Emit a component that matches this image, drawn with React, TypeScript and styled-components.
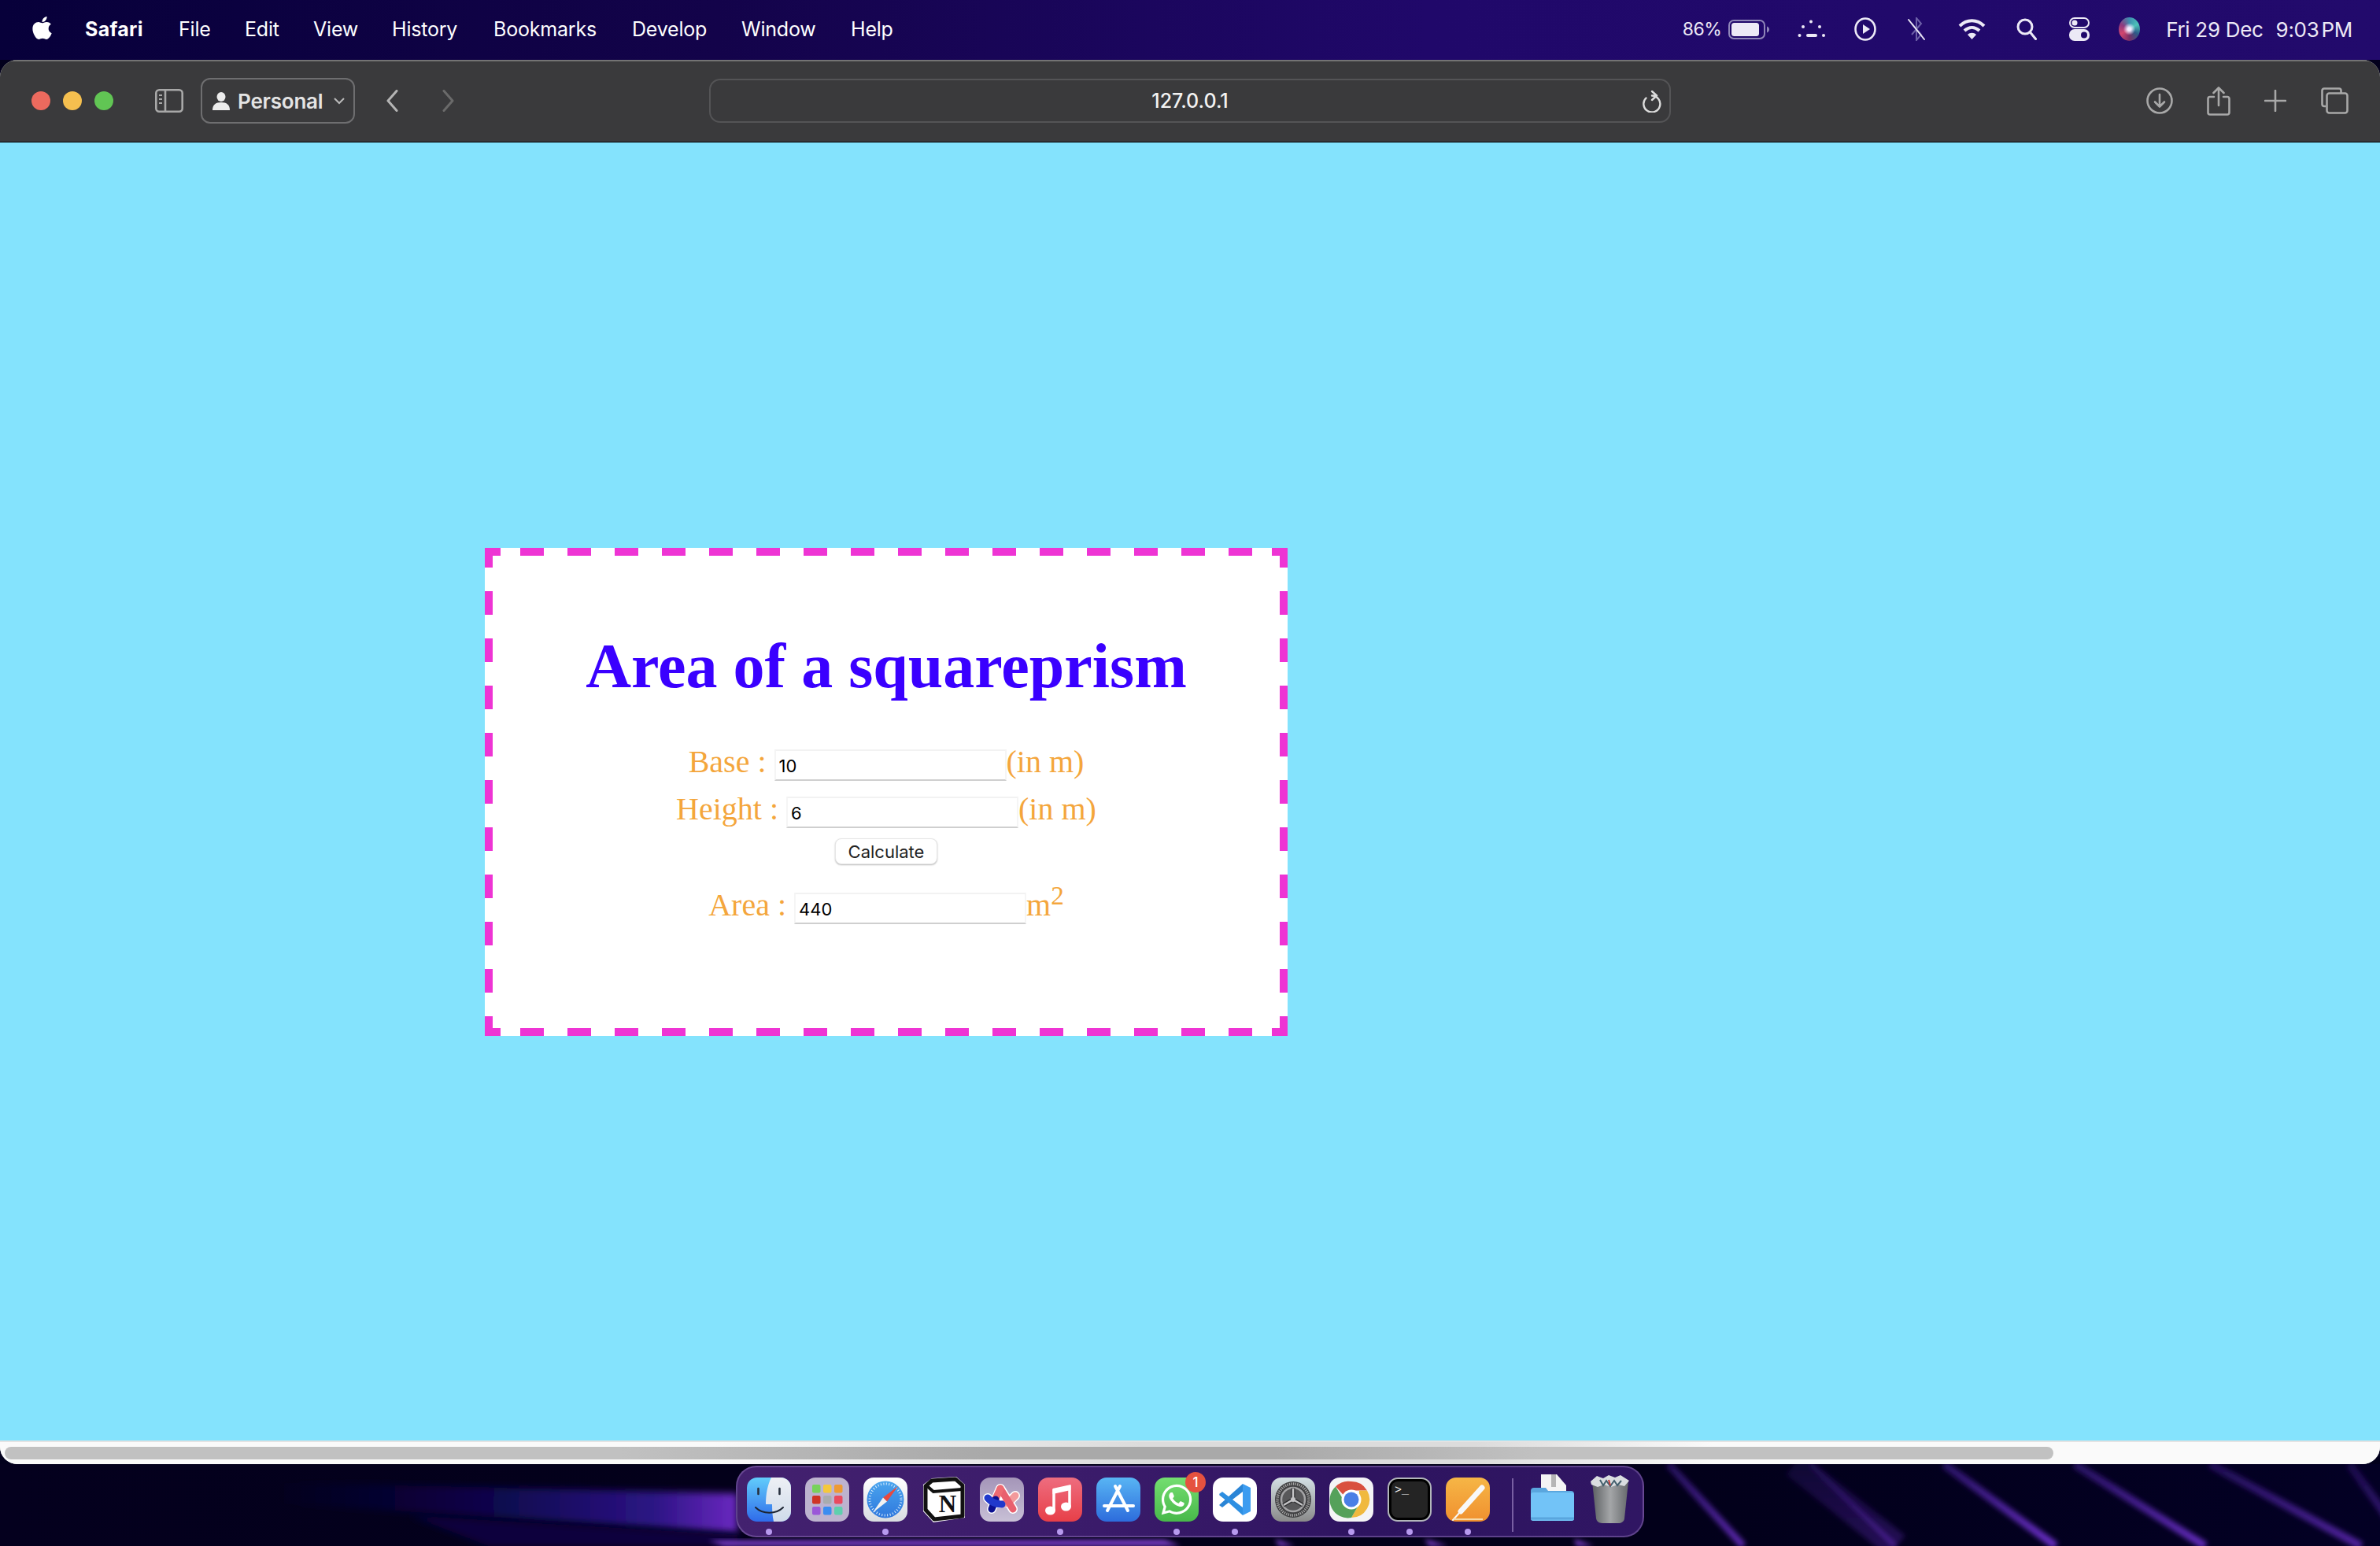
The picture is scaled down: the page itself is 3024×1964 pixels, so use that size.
import React from "react";
import styled, { createGlobalStyle } from "styled-components";
import { FaApple, FaWhatsapp } from "react-icons/fa";

const Global = createGlobalStyle`
  html, body { margin: 0; padding: 0; background: #000; }
  * { box-sizing: border-box; }
`;

const UI = `Inter, "Noto Sans", sans-serif`;
const SERIF = `"Liberation Serif", "Times New Roman", serif`;
const MAGENTA = "#EE34D4";

const Screen = styled.div`
  width: 3024px;
  height: 1964px;
  display: flex;
  flex-direction: column;
  overflow: hidden;
  background: #02001c;
`;

const MenuBar = styled.header`
  height: 76px;
  flex: none;
  display: flex;
  align-items: center;
  justify-content: space-between;
  padding: 0 35px 2px 37px;
  color: #fff;
  font: 500 25px ${UI};
  background: linear-gradient(90deg, #07003a 0%, #13034a 30%, #20086a 60%, #220a6c 100%);
`;

const MenuLeft = styled.nav`
  display: flex;
  align-items: center;
  height: 100%;
`;

const AppleMark = styled.span`
  display: flex;
  width: 71px;
  margin-top: -4px;
  font-size: 33px;
`;

const MenuItem = styled.span<{ $w: number; $bold?: boolean }>`
  width: ${(p) => p.$w}px;
  white-space: nowrap;
  font-weight: ${(p) => (p.$bold ? 700 : 400)};
  letter-spacing: ${(p) => (p.$bold ? "0.3px" : "-0.2px")};
`;

const MenuRight = styled.div`
  display: flex;
  align-items: center;
  height: 100%;
  color: #ece9f6;
`;

const Percent = styled.span`
  white-space: nowrap;
  letter-spacing: -0.6px;
  font-size: 23px;
  font-weight: 400;
`;

const DateText = styled.span`
  margin-left: 33px;
  white-space: nowrap;
  letter-spacing: -0.3px;
  font-size: 26px;
  font-weight: 400;
`;

const TimeText = styled.span`
  margin-left: 16px;
  white-space: nowrap;
  letter-spacing: -0.3px;
  word-spacing: -4px;
  font-size: 26px;
  font-weight: 400;
`;

const StatusSlot = styled.span<{ $ml: number }>`
  display: flex;
  margin-left: ${(p) => p.$ml}px;
`;

const Siri = styled.span`
  display: block;
  width: 27px;
  height: 30px;
  margin-left: 37px;
  border-radius: 50%;
  background:
    radial-gradient(circle at 50% 50%, #f3eaff 0 10%, transparent 38%),
    conic-gradient(#3d8fb0, #4cc2b8, #2b5a88, #7b2f66, #d2456f, #8e3a80, #3d8fb0);
`;

const Window = styled.main`
  height: 1784px;
  flex: none;
  display: flex;
  flex-direction: column;
  border-radius: 22px;
  overflow: hidden;
  background: #fafafa;
`;

const Toolbar = styled.div`
  height: 105px;
  flex: none;
  display: flex;
  align-items: center;
  padding: 0 39px 2px 40px;
  background: #3a3a3c;
  border-top: 2px solid #737373;
  border-bottom: 1px solid #000;
`;

const Lights = styled.div`
  display: flex;
  gap: 16px;
`;

const Light = styled.span<{ $c: string }>`
  width: 24px;
  height: 24px;
  border-radius: 50%;
  background: ${(p) => p.$c};
`;

const ToolIcon = styled.span<{ $ml: number }>`
  display: flex;
  margin-left: ${(p) => p.$ml}px;
  flex: none;
`;

const Profile = styled.div`
  width: 196px;
  height: 58px;
  margin-left: 22px;
  flex: none;
  display: flex;
  align-items: center;
  padding-left: 13px;
  border: 2px solid #6e6e70;
  border-radius: 12px;
  color: #e4e4e4;
  font: 600 26px ${UI};
  letter-spacing: -0.2px;
`;

const ProfileName = styled.span`
  margin: 0 14px 0 10px;
`;

const UrlBar = styled.div`
  width: 1222px;
  height: 56px;
  margin-left: 324px;
  flex: none;
  position: relative;
  display: flex;
  align-items: center;
  justify-content: center;
  border: 2px solid #545456;
  border-radius: 14px;
  color: #f2f2f2;
  font: 500 25px ${UI};
`;

const Reload = styled.span`
  position: absolute;
  right: 10px;
  top: 13px;
  display: flex;
`;

const Page = styled.section`
  flex: 1;
  padding: 515px 0 0 616px;
  background: #84e3fd;
`;

const Card = styled.div`
  width: 1020px;
  height: 620px;
  padding: 104px 0 0;
  text-align: center;
  font-family: ${SERIF};
  background-color: #fff;
  background-image:
    linear-gradient(${MAGENTA}, ${MAGENTA}),
    linear-gradient(${MAGENTA}, ${MAGENTA}),
    linear-gradient(${MAGENTA}, ${MAGENTA}),
    linear-gradient(${MAGENTA}, ${MAGENTA}),
    repeating-linear-gradient(90deg, ${MAGENTA} 0 15px, transparent 15px 45px, ${MAGENTA} 45px 60px),
    repeating-linear-gradient(90deg, ${MAGENTA} 0 15px, transparent 15px 45px, ${MAGENTA} 45px 60px),
    repeating-linear-gradient(180deg, ${MAGENTA} 0 25px, transparent 25px 55px, ${MAGENTA} 55px 60px),
    repeating-linear-gradient(180deg, ${MAGENTA} 0 25px, transparent 25px 55px, ${MAGENTA} 55px 60px);
  background-repeat: no-repeat;
  background-size: 20px 10px, 20px 10px, 20px 10px, 20px 10px, 100% 10px, 100% 10px, 10px 100%, 10px 100%;
  background-position: left top, right top, left bottom, right bottom, left top, left bottom, left top, right top;
`;

const Title = styled.h1`
  margin: 0 0 46px;
  height: 92px;
  line-height: 92px;
  font-size: 80px;
  font-weight: 700;
  color: #3a00ff;
`;

const Line = styled.div<{ $top?: number }>`
  height: 60px;
  line-height: 60px;
  margin-top: ${(p) => p.$top ?? 0}px;
  font-size: 40px;
  color: #f4a63c;
  white-space: nowrap;
`;

const Field = styled.input`
  width: 295px;
  height: 40px;
  padding: 3px 4px 0;
  border: 0;
  border-top: 2px solid #f2f2f2;
  border-left: 2px solid #f5f5f5;
  border-right: 2px solid #f5f5f5;
  border-bottom: 2px solid #cfcfcf;
  background: #fff;
  color: #000;
  font: 400 22px ${UI};
  outline: none;
`;

const ButtonLine = styled.div`
  height: 33px;
  margin-top: 7px;
  display: flex;
  justify-content: center;
`;

const CalcButton = styled.button`
  width: 130px;
  height: 33px;
  padding: 0;
  border: 1px solid #e6e6e6;
  border-radius: 8px;
  background: #fff;
  box-shadow: 0 1px 2px rgba(0, 0, 0, 0.28);
  color: #222;
  font: 400 22px ${UI};
`;

const ScrollTrack = styled.div`
  height: 30px;
  flex: none;
  padding: 6px 415px 6px 6px;
  background: linear-gradient(90deg, #fafafa 0%, #fafafa 30%, #dcdcdc 48%, #dcdcdc 62%, #fafafa 72%);
  border-top: 2px solid #e3e3e3;
`;

const ScrollThumb = styled.div`
  height: 16px;
  border-radius: 8px;
  background: linear-gradient(90deg, #c1c1c1 0%, #c1c1c1 30%, #a9a9a9 48%, #a9a9a9 62%, #c1c1c1 75%);
`;

const DockStrip = styled.footer`
  flex: 1;
  position: relative;
  display: flex;
  justify-content: center;
  padding-top: 2px;
  background: linear-gradient(90deg, #04001e 0%, #03001a 30%, #02001a 70%, #030024 100%);
`;

const Wallpaper = styled.svg`
  position: absolute;
  inset: 0;
  width: 100%;
  height: 100%;
`;

const Dock = styled.div`
  position: relative;
  height: 91px;
  display: flex;
  gap: 18px;
  padding: 13px 13px 0 12px;
  border: 2px solid rgba(150, 120, 190, 0.45);
  border-radius: 26px;
  background: linear-gradient(90deg, #43216f 0%, #3a1b6a 40%, #2e1460 70%, #301663 100%);
`;

const DockItem = styled.div`
  position: relative;
  width: 56px;
  height: 76px;
  flex: none;
`;

const Tile = styled.svg`
  display: block;
  width: 56px;
  height: 56px;
  overflow: visible;
`;

const RunDot = styled.span`
  position: absolute;
  left: 24px;
  top: 65px;
  width: 8px;
  height: 8px;
  border-radius: 50%;
  background: #b79aee;
`;

const Badge = styled.span`
  position: absolute;
  left: 39px;
  top: -7px;
  width: 26px;
  height: 26px;
  border-radius: 50%;
  background: #e5523f;
  color: #fff;
  font: 500 17px/26px ${UI};
  text-align: center;
`;

const Divider = styled.span`
  width: 2px;
  height: 68px;
  margin: 1px 3px 0 10px;
  background: rgba(170, 145, 205, 0.6);
  flex: none;
`;

const G = "#a8a8a8";

const SidebarIcon = () => (
  <svg width="36" height="30" viewBox="0 0 36 30" fill="none" stroke={G} strokeWidth="2.6">
    <rect x="1.3" y="1.3" width="33.4" height="27.4" rx="4" />
    <path d="M13 1.5v27" />
    <path d="M5 8h4M5 13h4M5 18h4" strokeWidth="2" />
  </svg>
);

const Person = () => (
  <svg width="22" height="23" viewBox="0 0 22 23" fill="#ececec">
    <ellipse cx="11" cy="6" rx="5.5" ry="6" />
    <path d="M0 23c0-7 4-10 11-10s11 3 11 10z" />
  </svg>
);

const Caret = () => (
  <svg width="14" height="9" viewBox="0 0 14 9" fill="none" stroke="#bbb" strokeWidth="2">
    <path d="M1 1l6 6 6-6" />
  </svg>
);

const Chevron = ({ dir, color }: { dir: "l" | "r"; color: string }) => (
  <svg width="15" height="28" viewBox="0 0 15 28" fill="none" stroke={color} strokeWidth="3" strokeLinecap="round" strokeLinejoin="round">
    <path d={dir === "l" ? "M13 1.5L2 14l11 12.5" : "M2 1.5L13 14 2 26.5"} />
  </svg>
);

const ReloadIcon = () => (
  <svg width="24" height="28" viewBox="0 0 24 28" fill="none" stroke="#dcdcdc" strokeWidth="2.4" strokeLinecap="round" strokeLinejoin="round">
    <path d="M4.500 9.500A10.500 10.500 0 1 0 12 6.500H17.500" />
    <path d="M12 1l6 5.500L12 12" />
  </svg>
);

const DownloadIcon = () => (
  <svg width="34" height="34" viewBox="0 0 34 34" fill="none" stroke={G} strokeWidth="2.6" strokeLinecap="round" strokeLinejoin="round">
    <circle cx="17" cy="17" r="15.5" />
    <path d="M17 9v15M11 18.5l6 6 6-6" />
  </svg>
);

const ShareIcon = () => (
  <svg width="30" height="37" viewBox="0 0 30 37" fill="none" stroke={G} strokeWidth="2.6" strokeLinecap="round" strokeLinejoin="round">
    <path d="M9 13H4a2.5 2.5 0 0 0-2.5 2.5v17.5A2.5 2.5 0 0 0 4 35.500h22a2.500 2.500 0 0 0 2.500-2.500V15.500A2.500 2.500 0 0 0 26 13h-5" />
    <path d="M15 24V2M8.500 8L15 1.500 21.500 8" />
  </svg>
);

const PlusIcon = () => (
  <svg width="28" height="28" viewBox="0 0 28 28" fill="none" stroke={G} strokeWidth="2.6" strokeLinecap="round">
    <path d="M14 1v26M1 14h26" />
  </svg>
);

const TabsIcon = () => (
  <svg width="35" height="34" viewBox="0 0 35 34" fill="none" stroke={G} strokeWidth="2.6" strokeLinejoin="round">
    <path d="M6 24H4a2.500 2.500 0 0 1-2.500-2.500V4A2.500 2.500 0 0 1 4 1.500h19A2.500 2.500 0 0 1 25.500 4v3" />
    <rect x="7.500" y="7.500" width="26" height="25" rx="3" />
  </svg>
);

const Battery = () => (
  <svg width="52" height="25" viewBox="0 0 52 25">
    <rect x="1" y="1" width="45" height="23" rx="6" fill="none" stroke="#8f86b8" strokeWidth="2" />
    <rect x="4" y="4" width="35" height="17" rx="3.500" fill="#ece9f6" />
    <path d="M49 8.500c2 .8 3 2.200 3 4s-1 3.200-3 4z" fill="#8f86b8" />
  </svg>
);

const DotsIcon = () => (
  <svg width="36" height="24" viewBox="0 0 36 24" fill="#ece9f6">
    <circle cx="17" cy="2.500" r="2" />
    <circle cx="7" cy="9" r="2" />
    <circle cx="28" cy="9" r="2" />
    <circle cx="2.500" cy="20" r="2" />
    <rect x="11" y="18" width="14" height="4" rx="2" />
    <circle cx="33" cy="20" r="2" />
  </svg>
);

const PlayIcon = () => (
  <svg width="28" height="30" viewBox="0 0 28 30" fill="none" stroke="#ece9f6" strokeWidth="2.6">
    <ellipse cx="14" cy="15" rx="12.500" ry="13.500" />
    <path d="M11 9l9 6-9 6z" fill="#ece9f6" stroke="none" />
  </svg>
);

const BluetoothOff = () => (
  <svg width="24" height="30" viewBox="0 0 24 30" fill="none" strokeWidth="2">
    <path d="M6 8l12 14-6 7V1l6 7L6 22" stroke="#6d60a8" />
    <path d="M2 3l20 25" stroke="#ece9f6" strokeLinecap="round" />
  </svg>
);

const WifiIcon = () => (
  <svg width="35" height="28" viewBox="0 0 35 28" fill="none" stroke="#ece9f6" strokeWidth="4">
    <path d="M2 10C11 1 24 1 33 10" />
    <path d="M8 16c6-5.500 13-5.500 19 0" />
    <path d="M17.500 27l-5.500-6c3-3 8-3 11 0z" fill="#ece9f6" stroke="none" />
  </svg>
);

const SearchIcon = () => (
  <svg width="26" height="28" viewBox="0 0 26 28" fill="none" stroke="#ece9f6" strokeWidth="3" strokeLinecap="round">
    <circle cx="11" cy="11" r="9" />
    <path d="M17.500 18l7 8.500" />
  </svg>
);

const ControlIcon = () => (
  <svg width="26" height="30" viewBox="0 0 26 30">
    <rect x="1" y="1" width="24" height="12" rx="6" fill="none" stroke="#ece9f6" strokeWidth="2" />
    <circle cx="7" cy="7" r="3.500" fill="#ece9f6" />
    <rect y="15" width="26" height="15" rx="7" fill="#ece9f6" />
    <circle cx="19" cy="22.500" r="4" fill="#20086a" />
  </svg>
);

const Finder = () => (
  <Tile viewBox="0 0 56 56">
    <defs>
      <linearGradient id="finderA" x1="0" y1="0" x2="0" y2="1">
        <stop offset="0" stopColor="#62cdfb" />
        <stop offset="1" stopColor="#2f6bea" />
      </linearGradient>
      <linearGradient id="finderB" x1="0" y1="0" x2="0" y2="1">
        <stop offset="0" stopColor="#eef0f5" />
        <stop offset="1" stopColor="#cfdbea" />
      </linearGradient>
      <clipPath id="finderClip">
        <rect width="56" height="56" rx="13" />
      </clipPath>
    </defs>
    <g clipPath="url(#finderClip)">
      <rect width="56" height="56" fill="url(#finderA)" />
      <path d="M31 0C26 10 24 22 24 34h8c0 8 .500 15 2 22h22V0z" fill="url(#finderB)" />
    </g>
    <path d="M14.500 14v7M41.500 14v7" stroke="#27303f" strokeWidth="2.600" strokeLinecap="round" />
    <path d="M11 38c9 9 26 9 35 0" fill="none" stroke="#1d2533" strokeWidth="2" strokeLinecap="round" />
  </Tile>
);

const LAUNCH = ["#78d25c", "#f5c83c", "#ee9a33", "#cf3426", "#a9acae", "#ea4a5f", "#9b57d8", "#3b8df0", "#5fcfae"];

const Launchpad = () => (
  <Tile viewBox="0 0 56 56">
    <rect width="56" height="56" rx="13" fill="#bdb3cf" />
    {LAUNCH.map((c, i) => (
      <rect key={c} x={9 + (i % 3) * 14} y={9 + Math.floor(i / 3) * 14} width="10.500" height="10.500" rx="2" fill={c} />
    ))}
  </Tile>
);

const Safari = () => (
  <Tile viewBox="0 0 56 56">
    <defs>
      <linearGradient id="safariT" x1="0" y1="0" x2="0" y2="1">
        <stop offset="0" stopColor="#ffffff" />
        <stop offset="1" stopColor="#d8dce0" />
      </linearGradient>
      <linearGradient id="safariC" x1="0" y1="0" x2="0" y2="1">
        <stop offset="0" stopColor="#4aa5ee" />
        <stop offset="1" stopColor="#2f78dd" />
      </linearGradient>
    </defs>
    <rect width="56" height="56" rx="13" fill="url(#safariT)" />
    <circle cx="28" cy="28" r="23.500" fill="url(#safariC)" />
    <circle cx="28" cy="28" r="20" fill="none" stroke="#d8ecfb" strokeWidth="3" strokeDasharray="1 2.500" />
    <path d="M44 11L25 25.500l5 5z" fill="#e8493f" />
    <path d="M11.500 45L25 25.500l5 5z" fill="#f2f2f2" />
  </Tile>
);

const Notion = () => (
  <Tile viewBox="0 0 56 56">
    <path d="M13 1L44 -1l11 10v42L15 57 2 43V9z" fill="#fff" />
    <path d="M13 4L43 2l9 8v39L16 53 5 41V11z" fill="#fff" stroke="#111" strokeWidth="5" strokeLinejoin="round" />
    <path d="M6 10l9 8 36-3" fill="none" stroke="#111" strokeWidth="4" />
    <text x="33" y="44" textAnchor="middle" fontFamily={SERIF} fontWeight="700" fontSize="31" fill="#111">N</text>
  </Tile>
);

const Arc = () => (
  <Tile viewBox="0 0 56 56">
    <defs>
      <linearGradient id="arcT" x1="0" y1="0" x2="0" y2="1">
        <stop offset="0" stopColor="#a495b8" />
        <stop offset="1" stopColor="#c8c0d6" />
      </linearGradient>
    </defs>
    <rect width="56" height="56" rx="13" fill="url(#arcT)" />
    <g fill="none" strokeLinecap="round">
      <path d="M15 40L26 14L42 40" stroke="#fff" strokeWidth="12" strokeLinejoin="round" />
      <path d="M10 26C18 35 34 36 45 23" stroke="#fff" strokeWidth="12" />
      <path d="M45 23C40 29 34 33 28 34" stroke="#f39a9c" strokeWidth="9" />
      <path d="M26 14L42 40" stroke="#e9606e" strokeWidth="9" />
      <path d="M20 27L26 14" stroke="#ee6a72" strokeWidth="9" />
      <path d="M20 28L15 40" stroke="#0b0f90" strokeWidth="9" />
      <path d="M10 26C15 32 22 34 28 34" stroke="#2038cc" strokeWidth="9" />
    </g>
  </Tile>
);

const Music = () => (
  <Tile viewBox="0 0 56 56">
    <defs>
      <linearGradient id="musicT" x1="0" y1="0" x2="0" y2="1">
        <stop offset="0" stopColor="#ee6d7f" />
        <stop offset="1" stopColor="#e73f48" />
      </linearGradient>
    </defs>
    <rect width="56" height="56" rx="13" fill="url(#musicT)" />
    <path d="M20 15v27M40 10v27" stroke="#fff" strokeWidth="3.500" fill="none" />
    <path d="M18.500 14L41.500 9v7l-23 5z" fill="#fff" />
    <ellipse cx="15.500" cy="42" rx="6.500" ry="5.500" fill="#fff" />
    <ellipse cx="35.500" cy="37" rx="6.500" ry="5.500" fill="#fff" />
  </Tile>
);

const AppStore = () => (
  <Tile viewBox="0 0 56 56">
    <defs>
      <linearGradient id="appT" x1="0" y1="0" x2="0" y2="1">
        <stop offset="0" stopColor="#58b5f4" />
        <stop offset="1" stopColor="#2d6cdc" />
      </linearGradient>
    </defs>
    <rect width="56" height="56" rx="13" fill="url(#appT)" />
    <path d="M30 11L14 42M24 11l16 31" stroke="#fff" strokeWidth="4" strokeLinecap="round" fill="none" />
    <path d="M10 36h37" stroke="#fff" strokeWidth="4" strokeLinecap="round" />
  </Tile>
);

const WhatsApp = () => (
  <Tile viewBox="0 0 56 56">
    <defs>
      <linearGradient id="waT" x1="0" y1="0" x2="0" y2="1">
        <stop offset="0" stopColor="#74de70" />
        <stop offset="1" stopColor="#48b84a" />
      </linearGradient>
    </defs>
    <rect width="56" height="56" rx="13" fill="url(#waT)" />
    <FaWhatsapp x="6" y="6" size="44" color="#fff" />
  </Tile>
);

const VSCode = () => (
  <Tile viewBox="0 0 56 56">
    <rect width="56" height="56" rx="13" fill="#fff" />
    <path d="M8 22l4-3 10 7-4 4z" fill="#1d72bd" />
    <path d="M38 8L8 35l4 3 26-20z" fill="#2a85d6" />
    <path d="M38 48L8 21l4-3 26 20z" fill="#2d8fe2" />
    <path d="M38 8l10 5v30l-10 5z" fill="#3c9cf0" />
  </Tile>
);

const Settings = () => (
  <Tile viewBox="0 0 56 56">
    <defs>
      <linearGradient id="setT" x1="0" y1="0" x2="0" y2="1">
        <stop offset="0" stopColor="#d4e0e4" />
        <stop offset="1" stopColor="#8a8a8a" />
      </linearGradient>
    </defs>
    <rect width="56" height="56" rx="13" fill="url(#setT)" />
    <circle cx="28" cy="28" r="23" fill="#3f3f41" />
    <circle cx="28" cy="28" r="20" fill="none" stroke="#a5a5a5" strokeWidth="3.500" strokeDasharray="1.300 1.300" />
    <circle cx="28" cy="28" r="17" fill="#444446" />
    <circle cx="28" cy="28" r="15" fill="#58585a" stroke="#a4a4a6" strokeWidth="2.500" />
    <g stroke="#2e2e30" strokeWidth="5">
      <path d="M28 28V13.500M28 28l12.500 7.200M28 28l-12.500 7.200" />
    </g>
    <g stroke="#c4c4c6" strokeWidth="2.500">
      <path d="M28 28V14M28 28l12 7M28 28l-12 7" />
    </g>
    <circle cx="28" cy="28" r="3" fill="#c4c4c6" />
  </Tile>
);

const Chrome = () => (
  <Tile viewBox="0 0 56 56">
    <rect width="56" height="56" rx="13" fill="#f4f4f6" />
    <path d="M28 5a23 23 0 0 1 20 11.500H28a11.500 11.500 0 0 0-10 5.800L8 11.500A23 23 0 0 1 28 5z" fill="#d9503f" />
    <path d="M48 16.500A23 23 0 0 1 28 51l10-17.300A11.500 11.500 0 0 0 38 22.300v-5.800z" fill="#f0b93e" />
    <path d="M28 51A23 23 0 0 1 8 11.500l10 17.300a11.500 11.500 0 0 0 20 5z" fill="#55a15a" />
    <circle cx="28" cy="28" r="12.500" fill="#fff" />
    <circle cx="28" cy="28" r="9.500" fill="#4a7fe6" />
  </Tile>
);

const TerminalLabel = styled.span`
  position: absolute;
  left: 9px;
  top: 8px;
  color: #f1f1f1;
  font: 400 15px/18px "Liberation Mono", monospace;
`;

const Terminal = () => (
  <>
    <Tile viewBox="0 0 56 56">
      <rect x="1" y="1" width="54" height="54" rx="12" fill="#000" stroke="#b2b6ba" strokeWidth="2" />
      <rect x="5" y="5" width="46" height="46" rx="8" fill="#242424" />
    </Tile>
    <TerminalLabel>&gt;_</TerminalLabel>
  </>
);

const Pages = () => (
  <Tile viewBox="0 0 56 56">
    <defs>
      <linearGradient id="pagesT" x1="0" y1="0" x2="0" y2="1">
        <stop offset="0" stopColor="#f6b646" />
        <stop offset="1" stopColor="#f0902f" />
      </linearGradient>
    </defs>
    <rect width="56" height="56" rx="13" fill="url(#pagesT)" />
    <path d="M46 13L19 43" stroke="#f8f8f8" strokeWidth="7" strokeLinecap="round" />
    <path d="M19 43L9 54" stroke="#f8f8f8" strokeWidth="2" strokeLinecap="round" />
    <path d="M10 55h37" stroke="#f7d9a8" strokeWidth="2" transform="translate(0 -2)" />
  </Tile>
);

const Folder = () => (
  <Tile viewBox="0 0 56 56">
    <path d="M14 -4h20l12 14v10H14z" fill="#f4f4f4" />
    <path d="M27 -4h6v16h-6z" fill="#b5b5b5" />
    <path d="M1 17a4 4 0 0 1 4-4h15l3 4h29a4 4 0 0 1 4 4v30a4 4 0 0 1-4 4H5a4 4 0 0 1-4-4z" fill="#5aa6de" />
    <rect x="1" y="19" width="55" height="36" rx="3" fill="#72c3f7" />
    <path d="M1 52h55" stroke="#5aa6de" strokeWidth="3" />
  </Tile>
);

const Trash = () => (
  <Tile viewBox="0 0 56 56">
    <defs>
      <linearGradient id="trashT" x1="0" y1="0" x2="1" y2="0">
        <stop offset="0" stopColor="#5c5f62" />
        <stop offset="0.5" stopColor="#a4a6a8" />
        <stop offset="1" stopColor="#66696c" />
      </linearGradient>
    </defs>
    <path d="M5 5l5 47c.500 4 4 6 8 6h20c4 0 7.500-2 8-6l5-47z" fill="url(#trashT)" />
    <path d="M3 5l8-7 8 3 7-4 8 3 7-3 11 7-6 7-8-2-9 3-9-3-8 3-8-3z" fill="#dadde0" />
    <path d="M15 3l4 7 4-6 5 7 5-7 4 6 5-6" fill="none" stroke="#44606e" strokeWidth="2" />
    <path d="M26 3l2 7" stroke="#c23c3c" strokeWidth="2" />
  </Tile>
);

const STREAKS = [
  { x1: 2120, x2: 2215, w: 9, o: 0.75 },
  { x1: 2280, x2: 2410, w: 34, o: 0.28 },
  { x1: 2300, x2: 2408, w: 5, o: 0.55 },
  { x1: 2470, x2: 2612, w: 10, o: 0.85 },
  { x1: 2636, x2: 2802, w: 10, o: 0.8 },
  { x1: 2808, x2: 3000, w: 10, o: 0.65 },
  { x1: 2985, x2: 3060, w: 10, o: 0.5 },
];

const DOCK = [
  { key: "finder", C: Finder, run: true },
  { key: "launch", C: Launchpad },
  { key: "safari", C: Safari, run: true },
  { key: "notion", C: Notion },
  { key: "arc", C: Arc },
  { key: "music", C: Music, run: true },
  { key: "appstore", C: AppStore },
  { key: "whatsapp", C: WhatsApp, run: true, badge: "1" },
  { key: "vscode", C: VSCode, run: true },
  { key: "settings", C: Settings },
  { key: "chrome", C: Chrome, run: true },
  { key: "terminal", C: Terminal, run: true },
  { key: "pages", C: Pages, run: true },
];

const MENUS: [string, number, boolean?][] = [
  ["Safari", 119, true],
  ["File", 84],
  ["Edit", 87],
  ["View", 100],
  ["History", 129],
  ["Bookmarks", 176],
  ["Develop", 139],
  ["Window", 139],
  ["Help", 60],
];

export default function App() {
  return (
    <Screen>
      <Global />
      <MenuBar>
        <MenuLeft>
          <AppleMark>
            <FaApple />
          </AppleMark>
          {MENUS.map(([label, w, bold]) => (
            <MenuItem key={label} $w={w} $bold={bold}>
              {label}
            </MenuItem>
          ))}
        </MenuLeft>
        <MenuRight>
          <Percent>86%</Percent>
          <StatusSlot $ml={9}><Battery /></StatusSlot>
          <StatusSlot $ml={36}><DotsIcon /></StatusSlot>
          <StatusSlot $ml={36}><PlayIcon /></StatusSlot>
          <StatusSlot $ml={39}><BluetoothOff /></StatusSlot>
          <StatusSlot $ml={41}><WifiIcon /></StatusSlot>
          <StatusSlot $ml={39}><SearchIcon /></StatusSlot>
          <StatusSlot $ml={41}><ControlIcon /></StatusSlot>
          <Siri />
          <DateText>Fri 29 Dec</DateText>
          <TimeText>9:03 PM</TimeText>
        </MenuRight>
      </MenuBar>
      <Window>
        <Toolbar>
          <Lights>
            <Light $c="#ec6a5e" />
            <Light $c="#f5bf4f" />
            <Light $c="#61c554" />
          </Lights>
          <ToolIcon $ml={53}><SidebarIcon /></ToolIcon>
          <Profile>
            <Person />
            <ProfileName>Personal</ProfileName>
            <Caret />
          </Profile>
          <ToolIcon $ml={40}><Chevron dir="l" color="#b4b4b4" /></ToolIcon>
          <ToolIcon $ml={56}><Chevron dir="r" color="#6a6a6a" /></ToolIcon>
          <UrlBar>
            127.0.0.1
            <Reload><ReloadIcon /></Reload>
          </UrlBar>
          <ToolIcon $ml={604}><DownloadIcon /></ToolIcon>
          <ToolIcon $ml={43}><ShareIcon /></ToolIcon>
          <ToolIcon $ml={43}><PlusIcon /></ToolIcon>
          <ToolIcon $ml={44}><TabsIcon /></ToolIcon>
        </Toolbar>
        <Page>
          <Card>
            <Title>Area of a squareprism</Title>
            <Line>
              Base : <Field readOnly value="10" />(in m)
            </Line>
            <Line>
              Height : <Field readOnly value="6" />(in m)
            </Line>
            <ButtonLine>
              <CalcButton type="button">Calculate</CalcButton>
            </ButtonLine>
            <Line $top={10}>
              Area : <Field readOnly value="440" />m<sup>2</sup>
            </Line>
          </Card>
        </Page>
        <ScrollTrack>
          <ScrollThumb />
        </ScrollTrack>
      </Window>
      <DockStrip>
        <Wallpaper viewBox="0 1860 3024 104" preserveAspectRatio="none">
          <defs>
            <linearGradient id="streak" x1="0" y1="0" x2="0" y2="1">
              <stop offset="0" stopColor="#2f1570" />
              <stop offset="1" stopColor="#7a35e0" />
            </linearGradient>
            <linearGradient id="slab" x1="0" y1="0" x2="1" y2="0">
              <stop offset="0" stopColor="#0a0540" stopOpacity="0" />
              <stop offset="0.5" stopColor="#0f0750" />
              <stop offset="0.82" stopColor="#2c1484" />
              <stop offset="1" stopColor="#6a28c0" />
            </linearGradient>
            <filter id="soft" x="-20%" y="-20%" width="140%" height="140%">
              <feGaussianBlur stdDeviation="3" />
            </filter>
            <filter id="softer" x="-20%" y="-40%" width="140%" height="180%">
              <feGaussianBlur stdDeviation="5" />
            </filter>
          </defs>
          <path d="M350 1883L937 1897L937 1947L350 1910z" fill="url(#slab)" filter="url(#softer)" />
          <path d="M520 1925L937 1950V1964H620z" fill="#08043c" filter="url(#softer)" />
          <path d="M900 1957L1480 1956L1500 1964H920z" fill="#7a3ec8" filter="url(#soft)" />
          <path d="M1620 1955l25 9h-20z M1810 1955l30 9h-24z M2000 1955l25 9h-22z" fill="#7a3ec8" filter="url(#soft)" />
          {STREAKS.map((s) => (
            <path key={s.x1} d={`M${s.x1} 1860L${s.x2} 1964`} stroke="url(#streak)" strokeWidth={s.w} strokeOpacity={s.o} filter="url(#soft)" fill="none" />
          ))}
        </Wallpaper>
        <Dock>
          {DOCK.map(({ key, C, run, badge }) => (
            <DockItem key={key}>
              <C />
              {badge && <Badge>{badge}</Badge>}
              {run && <RunDot />}
            </DockItem>
          ))}
          <Divider />
          <DockItem><Folder /></DockItem>
          <DockItem><Trash /></DockItem>
        </Dock>
      </DockStrip>
    </Screen>
  );
}
